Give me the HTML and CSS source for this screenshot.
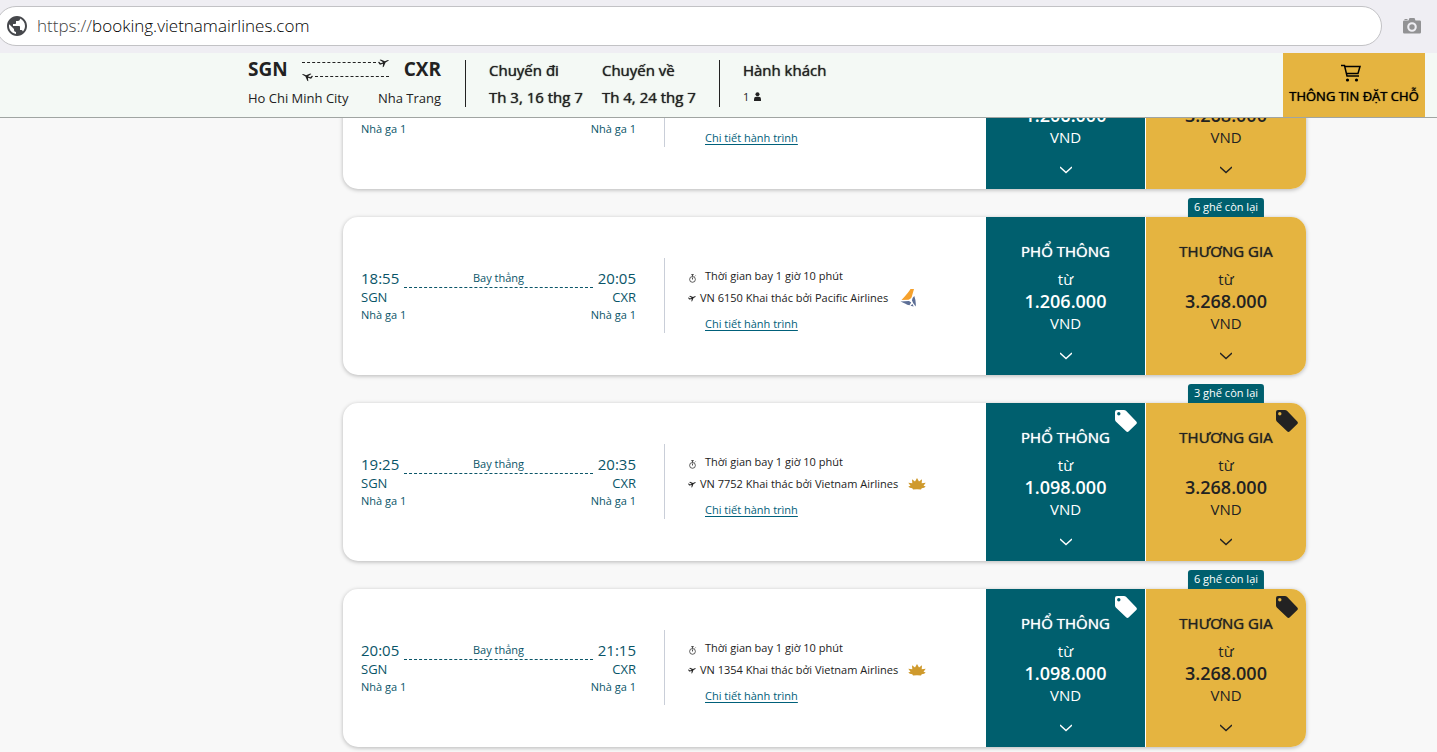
FILE: index.html
```html
<!DOCTYPE html>
<html lang="vi">
<head>
<meta charset="utf-8">
<title>Vietnam Airlines</title>
<link rel="stylesheet" href="styles.css">
</head>
<body>
<svg class="sprite" aria-hidden="true">
  <symbol id="plane" viewBox="0 0 24 24"><path d="M0 11l2.500-.6 3.500 3 5-2L3.500 6.500l2.500-1.200 9 4 5-2.300q2.800-1 3.500 0 .2 1.200-2.500 2.500L16.500 12l-4 9.500-2.300 1 .8-8L6 16.500q-2 .5-3-.7z"/></symbol>
  <symbol id="watch" viewBox="0 0 10 10"><g fill="none" stroke="currentColor"><circle cx="5" cy="6" r="3.200" stroke-width=".8"/><path d="M3.600.7h2.800M5 .7v2M7.500 2.600l.8-.8M5 3.900v2.200" stroke-width=".9"/></g></symbol>
  <symbol id="chevron" viewBox="0 0 12 8"><path d="M0 1l6 5.500 6-5.500" fill="none" stroke="currentColor" stroke-width="1.400"/></symbol>
  <symbol id="tag" viewBox="0 0 24 24"><path fill-rule="evenodd" d="M1 3v7.500c0 .8.300 1.400.8 1.900l10.300 9.900c.8.800 1.900.8 2.700 0l7.500-7.200c.8-.8.8-1.900 0-2.700L12 1.800C11.400 1.300 10.700 1 9.900 1H3a2 2 0 0 0-2 2zm3.800 3.500a1.700 1.700 0 1 0 0-3.400 1.700 1.700 0 0 0 0 3.400z"/></symbol>
  <symbol id="lotus" viewBox="0 0 18 12"><path d="M9 0l2 3.500L14 1.300l-.3 3.900 4-.5-2.200 3 2.200.8q-1.200 1.500-4 1.800L13 11.500q-4-.7-8 0l-.7-1.200Q1.500 10 .3 8.500l2.200-.8L.3 4.700l4 .5L4 1.300l3 2.200z"/></symbol>
  <symbol id="pacific" viewBox="0 0 16 18"><path fill="#f6a12c" d="M14 0H10.500Q9 3 1.500 11l7-.3q3-.8 3.700-4.400z"/><path fill="#5d6f96" d="M.5 12.500l8.500-.6 2.200 1.600-1.700 2.700q-2.500-.3-4-1.400zM14.300 7q-2.500 2-2.300 4.500.5 2.500 3.700 6 .6-5-1.400-10.500zM10.500 16.800l2-1.800 1.200 2.600z"/></symbol>
</svg>

<div class="browser">
  <label class="address">
    <svg class="globe" viewBox="0 0 24 24" aria-hidden="true"><path d="M12 2C6.480 2 2 6.480 2 12s4.480 10 10 10 10-4.480 10-10S17.520 2 12 2zm-1 17.930c-3.950-.49-7-3.850-7-7.930 0-.62.080-1.210.21-1.790L9 15v1c0 1.100.9 2 2 2v1.930zm6.900-2.540c-.26-.81-1-1.390-1.900-1.390h-1v-3c0-.55-.45-1-1-1H8v-2h2c.55 0 1-.45 1-1V7h2c1.100 0 2-.9 2-2v-.41c2.930 1.190 5 4.060 5 7.410 0 2.080-.8 3.970-2.100 5.390z"/></svg>
    <span class="url" role="textbox" aria-label="URL"><span class="scheme">https://</span>booking.vietnamairlines.com</span>
  </label>
  <button class="camera" aria-label="Camera"><svg viewBox="0 0 20 18"><path fill-rule="evenodd" d="M6.500 3.500L7.500 1h5l1 2.500h4.200q1.300 0 1.300 1.300v10.400q0 1.300-1.300 1.300H2.300Q1 16.500 1 15.200V4.800q0-1.300 1.300-1.300zM10 5.200a4.800 4.800 0 1 0 0 9.600 4.800 4.800 0 0 0 0-9.600zm0 2.100a2.700 2.700 0 1 1 0 5.400 2.700 2.700 0 0 1 0-5.400zM2.500 2h3v1h-3z"/></svg></button>
</div>

<header class="summary">
  <div class="trip">
    <div class="codes">
      <strong>SGN</strong>
      <div class="arrows">
        <div class="leg out"><span class="dots"></span><svg><use href="#plane"/></svg></div>
        <div class="leg in"><svg><use href="#plane"/></svg><span class="dots"></span></div>
      </div>
      <strong>CXR</strong>
    </div>
    <div class="cities"><span>Ho Chi Minh City</span><span>Nha Trang</span></div>
  </div>
  <div class="dates">
    <div class="fact"><span>Chuyến đi</span><span>Th 3, 16 thg 7</span></div>
    <div class="fact"><span>Chuyến về</span><span>Th 4, 24 thg 7</span></div>
  </div>
  <div class="fact pax"><span>Hành khách</span><span class="count">1 <svg viewBox="0 0 8 10"><circle cx="4" cy="2.500" r="2.300"/><path d="M0 10V8q0-2.800 2.500-2.800h3Q8 5.200 8 8v2z"/></svg></span></div>
  <button class="cart"><svg viewBox="0 0 20 18"><path d="M0 1.500h3.500L6 12h12M4.100 2.500H19L17 9.500H5.400" fill="none" stroke="currentColor" stroke-width="1.500"/><circle cx="6.500" cy="16" r="1.600"/><circle cx="15.500" cy="16" r="1.600"/></svg><span>THÔNG TIN ĐẶT CHỖ</span></button>
</header>

<main class="viewport">
<div class="results">
  <article class="card">
    <div class="route">
      <div class="ends gate"><span>Nhà ga 1</span><span>Nhà ga 1</span></div>
    </div>
    <div class="details">
      <a class="more" href="#">Chi tiết hành trình</a>
    </div>
    <button class="fare economy"><strong>1.206.000</strong><span>VND</span><svg class="chev"><use href="#chevron"/></svg></button>
    <button class="fare business"><strong>3.268.000</strong><span>VND</span><svg class="chev"><use href="#chevron"/></svg></button>
  </article>

  <article class="card">
    <div class="route">
      <div class="times"><span class="time">18:55</span><span class="direct">Bay thẳng</span><span class="time">20:05</span></div>
      <div class="ends"><span>SGN</span><span>CXR</span></div>
      <div class="ends gate"><span>Nhà ga 1</span><span>Nhà ga 1</span></div>
    </div>
    <div class="details">
      <p class="line duration"><svg><use href="#watch"/></svg>Thời gian bay 1 giờ 10 phút</p>
      <p class="line flight"><svg><use href="#plane"/></svg>VN 6150 Khai thác bởi Pacific Airlines<svg class="pacific"><use href="#pacific"/></svg></p>
      <a class="more" href="#">Chi tiết hành trình</a>
    </div>
    <button class="fare economy"><span class="cabin">PHỔ THÔNG</span><span>từ</span><strong>1.206.000</strong><span>VND</span><svg class="chev"><use href="#chevron"/></svg></button>
    <button class="fare business"><span class="seats">6 ghế còn lại</span><span class="cabin">THƯƠNG GIA</span><span>từ</span><strong>3.268.000</strong><span>VND</span><svg class="chev"><use href="#chevron"/></svg></button>
  </article>

  <article class="card">
    <div class="route">
      <div class="times"><span class="time">19:25</span><span class="direct">Bay thẳng</span><span class="time">20:35</span></div>
      <div class="ends"><span>SGN</span><span>CXR</span></div>
      <div class="ends gate"><span>Nhà ga 1</span><span>Nhà ga 1</span></div>
    </div>
    <div class="details">
      <p class="line duration"><svg><use href="#watch"/></svg>Thời gian bay 1 giờ 10 phút</p>
      <p class="line flight"><svg><use href="#plane"/></svg>VN 7752 Khai thác bởi Vietnam Airlines<svg class="lotus"><use href="#lotus"/></svg></p>
      <a class="more" href="#">Chi tiết hành trình</a>
    </div>
    <button class="fare economy"><svg class="tag"><use href="#tag"/></svg><span class="cabin">PHỔ THÔNG</span><span>từ</span><strong>1.098.000</strong><span>VND</span><svg class="chev"><use href="#chevron"/></svg></button>
    <button class="fare business"><span class="seats">3 ghế còn lại</span><svg class="tag"><use href="#tag"/></svg><span class="cabin">THƯƠNG GIA</span><span>từ</span><strong>3.268.000</strong><span>VND</span><svg class="chev"><use href="#chevron"/></svg></button>
  </article>

  <article class="card">
    <div class="route">
      <div class="times"><span class="time">20:05</span><span class="direct">Bay thẳng</span><span class="time">21:15</span></div>
      <div class="ends"><span>SGN</span><span>CXR</span></div>
      <div class="ends gate"><span>Nhà ga 1</span><span>Nhà ga 1</span></div>
    </div>
    <div class="details">
      <p class="line duration"><svg><use href="#watch"/></svg>Thời gian bay 1 giờ 10 phút</p>
      <p class="line flight"><svg><use href="#plane"/></svg>VN 1354 Khai thác bởi Vietnam Airlines<svg class="lotus"><use href="#lotus"/></svg></p>
      <a class="more" href="#">Chi tiết hành trình</a>
    </div>
    <button class="fare economy"><svg class="tag"><use href="#tag"/></svg><span class="cabin">PHỔ THÔNG</span><span>từ</span><strong>1.098.000</strong><span>VND</span><svg class="chev"><use href="#chevron"/></svg></button>
    <button class="fare business"><span class="seats">6 ghế còn lại</span><svg class="tag"><use href="#tag"/></svg><span class="cabin">THƯƠNG GIA</span><span>từ</span><strong>3.268.000</strong><span>VND</span><svg class="chev"><use href="#chevron"/></svg></button>
  </article>
</div>
</main>
</body>
</html>
```
FILE: styles.css
```css
* { box-sizing: border-box; }
body {
  margin: 0;
  height: 100vh;
  overflow: hidden;
  display: flex;
  flex-direction: column;
  background: #f8f8f8;
  color: #222;
  font-family: "Open Sans", "Noto Sans", sans-serif;
  font-size: 15px;
}
button { border: 0; padding: 0; font: inherit; color: inherit; cursor: pointer; }
svg { fill: currentColor; flex: none; }
.sprite { display: none; }

.browser {
  flex: none;
  display: flex;
  align-items: center;
  gap: 20px;
  padding: 6px 15px 7px 0;
  background: #efeef3;
}
.address {
  flex: 1;
  display: flex;
  align-items: center;
  gap: 8px;
  height: 40px;
  margin-left: -4px;
  padding-left: 8px;
  border: 1px solid #c2c2c5;
  border-radius: 20px;
  background: #fff;
}
.globe { width: 24px; height: 24px; color: #46484c; }
.url { font-size: 17px; font-weight: 300; line-height: 24px; color: #000; }
.scheme { color: #444; }
.camera { display: flex; background: none; color: #929294; }
.camera svg { width: 20px; height: 18px; }

.summary {
  position: relative;
  z-index: 2;
  flex: none;
  display: flex;
  align-items: center;
  height: 65px;
  padding: 0 12px 0 248px;
  background: #f4f9f5;
  border-bottom: 1px solid #a0a5a2;
}
.trip { width: 193px; line-height: 24px; padding-bottom: 4px; }
.codes, .cities { display: flex; justify-content: space-between; white-space: nowrap; }
.codes { font-size: 19px; margin-bottom: 4px; }
.cities { font-size: 13px; }
.arrows { flex: 1; margin: 0 15px 0 14px; display: flex; flex-direction: column; justify-content: center; gap: 3px; }
.leg { display: flex; align-items: center; gap: 2px; height: 11px; }
.leg svg { width: 11px; height: 11px; }
.dots { flex: 1; height: 0; border-top: 1px dashed #222; }
.in svg { transform: scaleX(-1); }
.dates {
  display: flex;
  gap: 19px;
  height: 47px;
  align-items: center;
  margin: 0 23px 4px 24px;
  padding: 0 23px;
  border-left: 1px solid #222;
  border-right: 1px solid #222;
}
.fact { display: flex; flex-direction: column; gap: 3px; line-height: 24px; white-space: nowrap; }
.fact, .cart, .cabin { text-shadow: 0 0 1px currentColor; }
.pax { margin-bottom: 4px; }
.count { display: flex; align-items: center; gap: 5px; font-size: 11px; text-shadow: none; }
.count svg { width: 7px; height: 9px; }
.cart {
  align-self: stretch;
  margin-left: auto;
  width: 142px;
  display: flex;
  flex-direction: column;
  align-items: center;
  justify-content: center;
  gap: 4px;
  background: #e5b440;
  color: #000;
  font-size: 13px;
  line-height: 20px;
  white-space: nowrap;
}
.cart svg { width: 20px; height: 18px; margin-left: -7px; }

.viewport { flex: 1; min-height: 0; overflow: hidden; }
.results {
  display: flex;
  flex-direction: column;
  gap: 28px;
  margin: -87px 131px 0 343px;
}
.card {
  display: grid;
  grid-template-columns: minmax(0, 321px) minmax(0, 1fr) 160px 160px;
  align-items: center;
  height: 158px;
  border-radius: 15px;
  background: #fff;
  box-shadow: 0 1px 4px #0004;
}
.card:first-child .route { padding-top: 38px; }
.card:first-child .fare { padding-top: 73px; }
.route { padding: 0 28px 2px 18px; color: #0a5568; }
.times { display: flex; align-items: center; gap: 5px; line-height: 22px; }
.direct {
  flex: 1;
  height: 20px;
  font-size: 11px;
  line-height: 19px;
  text-align: center;
  border-bottom: 1px dashed #0a5568;
}
.ends { display: flex; justify-content: space-between; font-size: 13px; line-height: 17px; }
.gate { font-size: 11px; }
.details {
  display: flex;
  flex-direction: column;
  align-items: flex-start;
  height: 75px;
  margin-bottom: 2px;
  padding-left: 23px;
  border-left: 1px solid #c9ced8;
  font-size: 11px;
  line-height: 18px;
}
.line { margin: 0; display: flex; align-items: center; white-space: nowrap; height: 22px; }
.duration { gap: 8px; padding-bottom: 1px; margin-top: 8px; margin-bottom: -1px; }
.duration svg { width: 9px; height: 9px; margin-top: 4px; }
.flight { gap: 4px; }
.flight svg { width: 8px; height: 8px; }
.flight .lotus { width: 18px; height: 12px; margin-left: 6px; color: #cf9a2d; }
.flight .pacific { width: 16px; height: 18px; margin-left: 8px; }
.more { margin: auto 0 0 17px; color: #00607a; text-underline-offset: 2px; }
.fare {
  position: relative;
  align-self: stretch;
  display: flex;
  flex-direction: column;
  align-items: center;
  padding-top: 22px;
  line-height: 22px;
}
.fare strong { font-size: 18px; font-weight: 600; }
.cabin { line-height: 24px; margin-bottom: 5px; }
.economy { background: #005f6e; color: #fff; border-right: 1px solid #fff; }
.economy .cabin { font-weight: 500; }
.business { background: #e5b440; border-radius: 0 15px 15px 0; }
.chev { width: 12px; height: 8px; margin-top: 18px; }
.tag { position: absolute; top: 6px; right: 7px; width: 24px; height: 24px; }
.seats {
  position: absolute;
  top: -19px;
  left: 50%;
  transform: translateX(-50%);
  padding: 0 6px;
  height: 19px;
  line-height: 17px;
  border-radius: 3px 3px 0 0;
  background: #005f6e;
  color: #fff;
  font-size: 11px;
  white-space: nowrap;
}
```
